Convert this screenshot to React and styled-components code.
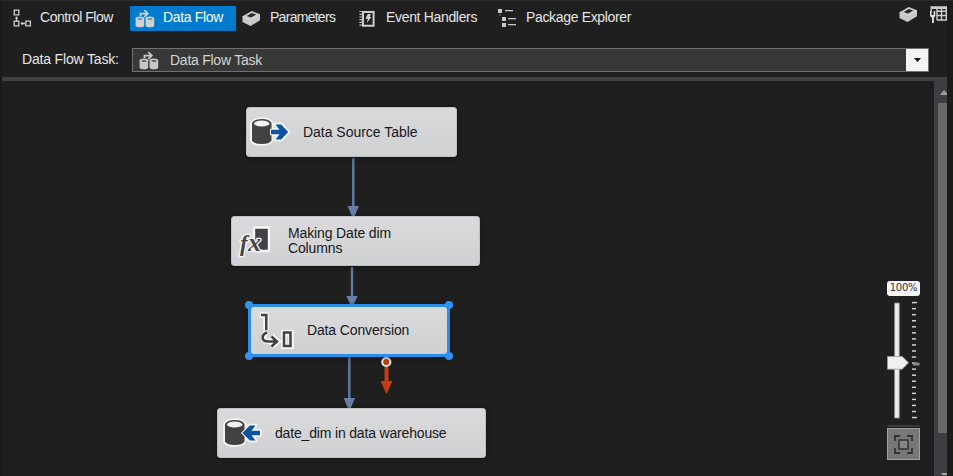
import React from "react";
import styled, { createGlobalStyle } from "styled-components";

const GlobalStyle = createGlobalStyle`
  * { box-sizing: border-box; }
  body { margin: 0; background: #1c1c1f; overflow: hidden; }
  svg { display: block; flex: none; }
`;

const Window = styled.div`
  width: 953px;
  height: 476px;
  display: flex;
  flex-direction: column;
  padding-right: 6px;
  border-left: 2px solid #19191b;
  border-top: 1px solid #29292e;
  background: #1b1b1e;
  font-family: "Liberation Sans", Arial, sans-serif;
  font-size: 14px;
  color: #e6e6e6;
`;

const Header = styled.header`
  height: 76px;
  flex: none;
  background: #1f1f20;
`;

const TabBar = styled.nav`
  display: flex;
  height: 40px;
  padding-top: 5px;
`;

const Tab = styled.div`
  display: flex;
  align-items: center;
  width: ${(p) => p.$width}px;
  height: 25px;
  padding-left: ${(p) => p.$inset}px;
  gap: ${(p) => p.$gap ?? 8}px;
  border-radius: 1px;
  background: ${(p) => (p.$active ? "#007acc" : "transparent")};
  color: ${(p) => (p.$active ? "#ffffff" : "#e4e4e4")};
`;

const Label = styled.span`
  white-space: pre-line;
  line-height: 15px;
  letter-spacing: ${(p) => p.$track ?? 0}px;
  margin-bottom: ${(p) => p.$lift ?? 0}px;
`;

const Tools = styled.div`
  display: flex;
  align-items: flex-start;
  gap: 12px;
  margin-left: auto;
`;

const TaskRow = styled.div`
  display: flex;
  align-items: flex-start;
  padding: 7px 18px 0 20px;
`;

const TaskCaption = styled.div`
  width: 110px;
  height: 24px;
  display: flex;
  align-items: center;
`;

const Combo = styled.div`
  flex: 1;
  height: 24px;
  display: flex;
  align-items: center;
  gap: 11px;
  padding-left: 6px;
  border: 1px solid #707070;
  background: #383838;
  color: #d4d4d4;
`;

const DropButton = styled.div`
  width: 22px;
  height: 22px;
  margin-left: auto;
  display: grid;
  place-items: center;
  background: #f4f4f4;
`;

const Surface = styled.main`
  flex: 1;
  min-height: 0;
  display: flex;
  border-top: 4px solid #3f4145;
  background: #1f1f20;
`;

const Canvas = styled.div`
  flex: 1;
  position: relative;
  overflow: hidden;
`;

const Wires = styled.svg`
  position: absolute;
  inset: 0;
`;

const Node = styled.div`
  position: absolute;
  left: ${(p) => p.$x}px;
  top: ${(p) => p.$y}px;
  width: ${(p) => p.$w}px;
  height: ${(p) => p.$h ?? 50}px;
  display: flex;
  align-items: center;
  padding-left: ${(p) => p.$inset}px;
  gap: ${(p) => p.$gap}px;
  border: ${(p) => (p.$selected ? "3px solid #2a8ceb" : "1px solid #bfc0c2")};
  border-radius: ${(p) => (p.$selected ? 5 : 3)}px;
  background: linear-gradient(#dadadd, #d0d1d3);
  color: #18181a;
  box-shadow: 0 1px 5px rgba(0, 0, 0, 0.45);
`;

const Grip = styled.i`
  position: absolute;
  width: 8px;
  height: 8px;
  border-radius: 50%;
  background: #2f93f2;
  ${(p) => p.$v}: -6px;
  ${(p) => p.$h}: -6px;
`;

const ScrollBar = styled.aside`
  width: 13px;
  display: flex;
  flex-direction: column;
  align-items: flex-end;
  padding-top: 9px;
  background: #3e3e42;
`;

const Thumb = styled.div`
  width: 9px;
  height: 330px;
  margin: 8px 0 40px;
  background: #686868;
`;

const ZoomPanel = styled.div`
  position: absolute;
  left: 885px;
  top: 200px;
  width: 33px;
  display: flex;
  flex-direction: column;
`;

const ZoomValue = styled.div`
  height: 15px;
  border-radius: 3px;
  background: #f4f5f8;
  color: #333;
  font-family: "DejaVu Sans", sans-serif;
  font-size: 10px;
  letter-spacing: -0.25px;
  line-height: 13px;
  text-align: center;
`;

const FitButton = styled.div`
  height: 32px;
  display: grid;
  place-items: center;
  border: 1px solid #a0a0a0;
  background: #777;
`;

const FlowIcon = () => (
  <svg width="19" height="19" viewBox="0 0 19 19" fill="none" stroke="#cfcfcf" strokeWidth="1.3">
    <path d="M1.2 1.2h4.6v4.6H1.2zM1.2 12.2h4.6v4.6H1.2zM12.8 12.2h4.6v4.6h-4.6zM3.5 12V8M8 14.5h4" />
    <path d="M1.8 9.5L3.5 7.2l1.7 2.3zM9.8 12.8L7.4 14.5l2.4 1.7z" fill="#cfcfcf" stroke="none" />
  </svg>
);

const DataIcon = ({ dark, light = "#d0d0d0" }) => (
  <svg width="20" height="19" viewBox="0 0 20 19">
    <path d="M0.6 9.5v6.8q0 2 4.3 2t4.3-2V9.5zM10.6 9.5v6.8q0 2 4.3 2t4.3-2V9.5z" fill={light} />
    <ellipse cx="4.9" cy="9.6" rx="4.3" ry="2.1" fill={light} />
    <ellipse cx="14.9" cy="9.6" rx="4.3" ry="2.1" fill={light} />
    <ellipse cx="5" cy="10" rx="2.6" ry="0.8" fill={dark} />
    <ellipse cx="15" cy="10" rx="2.6" ry="0.8" fill={dark} />
    <path d="M5.5 7V4.6H12M9.3 1.2l3.5 3.4L9.3 8" fill="none" stroke={light} strokeWidth="1.8" />
  </svg>
);

const BoxIcon = () => (
  <svg width="19" height="17" viewBox="0 0 19 17">
    <path d="M0.5 6.3L9.8 1l8.2 3.3v6L8.5 16 0.5 12z" fill="#c9c9c9" />
    <path d="M4.8 5.9l5-3 4.4 1.7-5.2 3z" fill="#29292a" />
    <path d="M0.8 6.5L8.5 9.6 18 4.4" fill="none" stroke="#dedede" strokeWidth="0.7" />
  </svg>
);

const EventIcon = () => (
  <svg width="16" height="18" viewBox="0 0 16 18">
    <path d="M4 1.9h10.6v13.8H4z" fill="none" stroke="#cecece" strokeWidth="2" />
    <path d="M0.4 1.5h3M0.4 4.3h3M0.4 7h3M0.4 9.7h3M0.4 12.4h3M0.4 15.2h3" stroke="#bbb" strokeWidth="1.2" />
    <path d="M8.8 4h3l-1.1 3h1.7l-4.6 6 1-4.2H6.4z" fill="#d5d5d5" />
  </svg>
);

const TreeIcon = () => (
  <svg width="19" height="19" viewBox="0 0 19 19" fill="#c8c8c8">
    <path d="M0 0h4v4H0zM4 8h4v4H4zM4 14h4v4H4zM7 1h8v1.3H7zM10 9h8v1.3h-8zM10 15h8v1.3h-8zM1.5 5.4h1v1h-1z" />
  </svg>
);

const GridIcon = () => (
  <svg width="17" height="19" viewBox="0 0 17 19">
    <path d="M1.2 6V1h15.8M7 5.2h10M7 9.5h10M7 14h10M7 3v11M11.5 3v11M16.3 1v13" fill="none" stroke="#cfcfcf" strokeWidth="1.4" />
    <path d="M2 1h15v2H2z" fill="#cfcfcf" />
    <path d="M0 5h1.6v4h2V5h1.7v5l-1.4 2v5H2v-5L0 10z" fill="#dedede" />
  </svg>
);

const DatabaseIcon = ({ incoming }) => {
  const cylinder = "M2 6v17.5Q4 27 11.8 27T21.5 23.5V6Q19.5 2 11.8 2T2 6z";
  const arrow = incoming
    ? "M37 12.7v4.6h-8.5l4 5.2h-5.7L19.3 15l7.5-7.5h5.7l-4 5.2z"
    : "M21 12.7h8.5l-4-5.2h5.7L38.2 15l-7 7.5h-5.7l4-5.2H21z";
  return (
    <svg width="40" height="30" viewBox="0 0 40 30">
      <g fill="#f5f5f6" stroke="#f5f5f6" strokeWidth="3.6" strokeLinejoin="round">
        <path d={cylinder} />
        <path d={arrow} />
      </g>
      <path d={cylinder} fill="#414244" />
      <ellipse cx="11.7" cy="6.5" rx="7.8" ry="3" fill="#f2f2f2" />
      <path d={arrow} fill="#0b55a0" stroke="#f5f5f6" strokeWidth="2" paintOrder="stroke" />
    </svg>
  );
};

const FxSvg = styled.svg`
  font-family: "Liberation Serif", serif;
  font-style: italic;
  font-weight: bold;
`;

const FormulaIcon = () => (
  <FxSvg width="35" height="34" viewBox="0 0 35 34">
    <path d="M18 3.5h15v23.5H18z" fill="#414244" stroke="#f7f7f7" strokeWidth="2.4" />
    <g fill="#454648" stroke="#f7f7f7" strokeWidth="2.6" strokeLinejoin="round" paintOrder="stroke">
      <text x="4" y="27" fontSize="23">f</text>
      <text x="12" y="27" fontSize="26">x</text>
    </g>
  </FxSvg>
);

const ConversionIcon = () => (
  <svg width="36" height="37" viewBox="0 0 36 37" fill="none">
    <g stroke="#f8f8f8" strokeWidth="5.6">
      <path d="M0 3h8.5M6 3v15M6 20Q0 29.5 10 29.5h7M11.5 24.5l6 5-6 5M24 20.5h7v14h-7z" />
    </g>
    <g stroke="#404143" strokeWidth="2.5">
      <path d="M1 3h5.3v15M7 20.5C1 23 1 29.5 8 29.5h9M11.5 24.5l5.5 5-5.5 5M24 20.5h6.5v13.5H24z" />
    </g>
  </svg>
);

const Connectors = () => (
  <Wires width="932" height="395" viewBox="2 81 932 395">
    <g stroke="#5f7ba5" strokeWidth="2.4">
      <path d="M353.3 158v51M352 267v31M349.3 357v43" />
    </g>
    <path d="M347.7 206h11.2l-4.2 10h-2.8zM346.3 296h11.4l-4.2 9h-3zM343.7 398h11.3l-4.2 10h-3z" fill="#6480aa" />
    <path d="M386.5 367v17" stroke="#c43e0d" strokeWidth="4" />
    <path d="M380.5 381h12l-6 13z" fill="#c43e0d" />
    <circle cx="386.3" cy="362" r="4.1" fill="#c43e0d" stroke="#f0f0f0" strokeWidth="2" />
  </Wires>
);

const Slider = () => {
  const ticks = Array.from({ length: 20 }, (_, i) => i * 6.05);
  return (
    <svg width="33" height="132" viewBox="0 0 33 132">
      <path d="M7.6 7h4.7v115H7.6z" fill="#eee" stroke="#888" strokeWidth="1" />
      {ticks.map((y, i) => (
        <path key={y} d={i === 0 || i === 19 ? `M25 ${y + 6.6}h5` : `M25 ${y + 6.6}h4`} stroke="#d0d0d0" strokeWidth="1.5" />
      ))}
      <path d="M26 68h6.5" stroke="#8a8a8a" strokeWidth="3" />
      <path d="M0.5 60.5h14.7l6.3 6.3-6.3 6.4H0.5z" fill="#f0f0f0" stroke="#999" strokeWidth="0.8" />
      <path d="M0 130h33" stroke="#444" strokeWidth="1.5" />
    </svg>
  );
};

export default function App() {
  return (
    <>
      <GlobalStyle />
      <Window>
        <Header>
          <TabBar>
            <Tab $width={128} $inset={11}><FlowIcon /><Label $track={-0.47} $lift={2}>Control Flow</Label></Tab>
            <Tab $width={106} $inset={5} $active><DataIcon dark="#287fba" /><Label $track={-0.33} $lift={2}>Data Flow</Label></Tab>
            <Tab $width={118} $inset={6} $gap={9}><BoxIcon /><Label $track={-0.72} $lift={2}>Parameters</Label></Tab>
            <Tab $width={138} $inset={5} $gap={11}><EventIcon /><Label $track={-0.33} $lift={2}>Event Handlers</Label></Tab>
            <Tab $width={150} $inset={6} $gap={9}><TreeIcon /><Label $track={-0.34} $lift={2}>Package Explorer</Label></Tab>
            <Tools><BoxIcon /><GridIcon /></Tools>
          </TabBar>
          <TaskRow>
            <TaskCaption><Label $track={-0.17} $lift={2}>Data Flow Task:</Label></TaskCaption>
            <Combo>
              <DataIcon dark="#383838" light="#c6c6c6" />
              <Label $track={-0.25}>Data Flow Task</Label>
              <DropButton>
                <svg width="7" height="4" viewBox="0 0 7 4"><path d="M0 0h7L3.5 4z" fill="#111" /></svg>
              </DropButton>
            </Combo>
          </TaskRow>
        </Header>
        <Surface>
          <Canvas>
            <Connectors />
            <Node $x={244} $y={26} $w={211} $inset={3} $gap={13}>
              <DatabaseIcon /><Label $track={-0.02}>Data Source Table</Label>
            </Node>
            <Node $x={229} $y={135} $w={249} $inset={4} $gap={17}>
              <FormulaIcon /><Label $track={-0.14} $lift={1}>{"Making Date dim\nColumns"}</Label>
            </Node>
            <Node $x={246} $y={223} $w={202} $h={53} $inset={9} $gap={11} $selected>
              <ConversionIcon /><Label $track={-0.14}>Data Conversion</Label>
              <Grip $v="top" $h="left" /><Grip $v="top" $h="right" />
              <Grip $v="bottom" $h="left" /><Grip $v="bottom" $h="right" />
            </Node>
            <Node $x={215} $y={327} $w={269} $inset={5} $gap={12}>
              <DatabaseIcon incoming /><Label $track={-0.17}>date_dim in data warehouse</Label>
            </Node>
            <ZoomPanel>
              <ZoomValue>100%</ZoomValue>
              <Slider />
              <FitButton>
                <svg width="19" height="19" viewBox="0 0 19 19" fill="none" stroke="#333">
                  <path d="M1 6V1h5M13 1h5v5M18 13v5h-5M6 18H1v-5" strokeWidth="1.8" />
                  <path d="M5 5h9v9H5z" strokeWidth="1.5" fill="#858585" />
                </svg>
              </FitButton>
            </ZoomPanel>
          </Canvas>
          <ScrollBar>
            <svg width="7" height="5" viewBox="0 0 7 5"><path d="M0 5L4 0l3 3v2z" fill="#999" /></svg>
            <Thumb />
            <svg width="6" height="3" viewBox="0 0 6 3"><path d="M0 0h6v2H2z" fill="#aaa" /></svg>
          </ScrollBar>
        </Surface>
      </Window>
    </>
  );
}
